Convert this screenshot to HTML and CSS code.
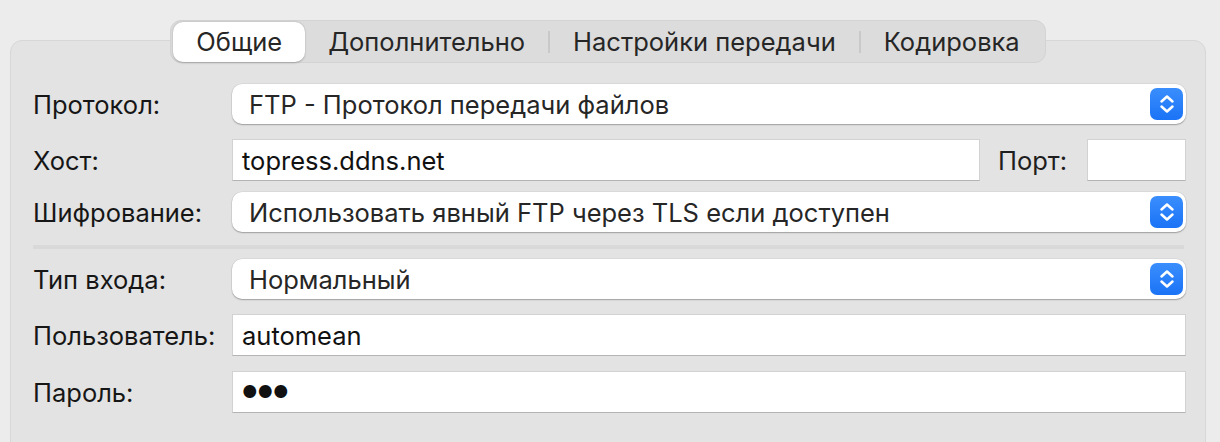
FILE: index.html
```html
<!DOCTYPE html>
<html lang="ru">
<head>
  <meta charset="UTF-8" />
  <title>Настройки сервера</title>
  <link rel="stylesheet" href="styles.css">
</head>
<body>

<div class="tabs">
  <span class="tab active">Общие</span>
  <span class="tab">Дополнительно</span>
  <span class="tab-sep"></span>
  <span class="tab">Настройки передачи</span>
  <span class="tab-sep"></span>
  <span class="tab">Кодировка</span>
</div>

<main class="panel">
  <div class="row row-protocol">
    <label class="label">Протокол:</label>
    <div class="popup">
      <span class="popup-text">FTP - Протокол передачи файлов</span>
      <span class="stepper">
        <svg width="18" height="24" viewBox="0 0 18 24"><path d="M3.5 9.5 9 4.5 14.5 9.5M3.5 14.5 9 19.5 14.5 14.5" fill="none" stroke="#fff" stroke-width="2.5" stroke-linecap="round" stroke-linejoin="round"/></svg>
      </span>
    </div>
  </div>

  <div class="row row-host">
    <label class="label">Хост:</label>
    <div class="field field-host">topress.ddns.net</div>
    <label class="port-label">Порт:</label>
    <div class="field field-port"></div>
  </div>

  <div class="row row-crypt">
    <label class="label">Шифрование:</label>
    <div class="popup">
      <span class="popup-text">Использовать явный FTP через TLS если доступен</span>
      <span class="stepper">
        <svg width="18" height="24" viewBox="0 0 18 24"><path d="M3.5 9.5 9 4.5 14.5 9.5M3.5 14.5 9 19.5 14.5 14.5" fill="none" stroke="#fff" stroke-width="2.5" stroke-linecap="round" stroke-linejoin="round"/></svg>
      </span>
    </div>
  </div>

  <div class="separator"></div>

  <div class="row row-login">
    <label class="label">Тип входа:</label>
    <div class="popup">
      <span class="popup-text">Нормальный</span>
      <span class="stepper">
        <svg width="18" height="24" viewBox="0 0 18 24"><path d="M3.5 9.5 9 4.5 14.5 9.5M3.5 14.5 9 19.5 14.5 14.5" fill="none" stroke="#fff" stroke-width="2.5" stroke-linecap="round" stroke-linejoin="round"/></svg>
      </span>
    </div>
  </div>

  <div class="row row-user">
    <label class="label">Пользователь:</label>
    <div class="field">automean</div>
  </div>

  <div class="row row-pass">
    <label class="label">Пароль:</label>
    <div class="field field-pass"><span class="dots">●●●</span></div>
  </div>
</main>

</body>
</html>
```

FILE: styles.css
```css
body {
  font-family: Inter, 'Liberation Sans', sans-serif;
  font-size: 25.5px;
  margin: 0;
  padding: 20px 14px 0 10px;
  background-color: #ececec;
  color: #1e1e1e;
  overflow: hidden;
}

/* segmented tab bar sitting across the panel's top edge */
.tabs {
  position: relative;
  z-index: 1;
  display: flex;
  align-items: center;
  width: max-content;
  height: 43px;
  margin: 0 auto -23px;
  padding: 0 2px;
  box-sizing: border-box;
  background: #dcdcdc;
  border: 1px solid #d3d3d3;
  border-radius: 11px;
}

.tab {
  padding: 0 23px;
  line-height: 40px;
  color: #262626;
}

.tab.active {
  background: #fff;
  border-radius: 10px;
  box-shadow: 0 0.5px 2px rgba(0,0,0,0.25);
}

.tab-sep {
  width: 2px;
  height: 22px;
  background: #c9c9c9;
}

.panel {
  background: #e3e3e3;
  border: 1px solid #d7d7d7;
  border-radius: 12px;
  padding: 43px 19px 60px 22px;
}

.row {
  display: flex;
  align-items: center;
}

.label {
  width: 199px;
  flex-shrink: 0;
  color: #161616;
}

.popup {
  flex: 1;
  height: 40px;
  display: flex;
  align-items: center;
  justify-content: space-between;
  padding: 0 3px 0 17px;
  background: #fff;
  border-radius: 10px;
  box-shadow: 0 1px 1.5px rgba(0,0,0,0.28), 0 0 0 0.5px rgba(0,0,0,0.08);
}

.popup-text {
  color: #262626;
}

.stepper {
  width: 33px;
  height: 32px;
  display: flex;
  align-items: center;
  justify-content: center;
  border-radius: 7px;
  background: linear-gradient(#3a8efd, #1b73f6);
}

.field {
  flex: 1;
  height: 42px;
  box-sizing: border-box;
  display: flex;
  align-items: center;
  padding-left: 9px;
  background: #fff;
  border: 1px solid #d2d2d2;
  border-bottom-color: #b4b4b4;
  color: #111;
}

.field-host {
  flex: 0 0 748px;
}

.port-label {
  margin-left: 18px;
  width: 89px;
}

.field-port {
  flex: 1;
}

.dots {
  font-size: 17px;
}

.row-host {
  margin-top: 15px;
}

.row-crypt {
  margin-top: 11px;
}

.separator {
  height: 4px;
  margin: 13px 2px 10px 0;
  background: #d9d9d9;
}

.row-user {
  margin-top: 15px;
}

.row-pass {
  margin-top: 15px;
}
```
